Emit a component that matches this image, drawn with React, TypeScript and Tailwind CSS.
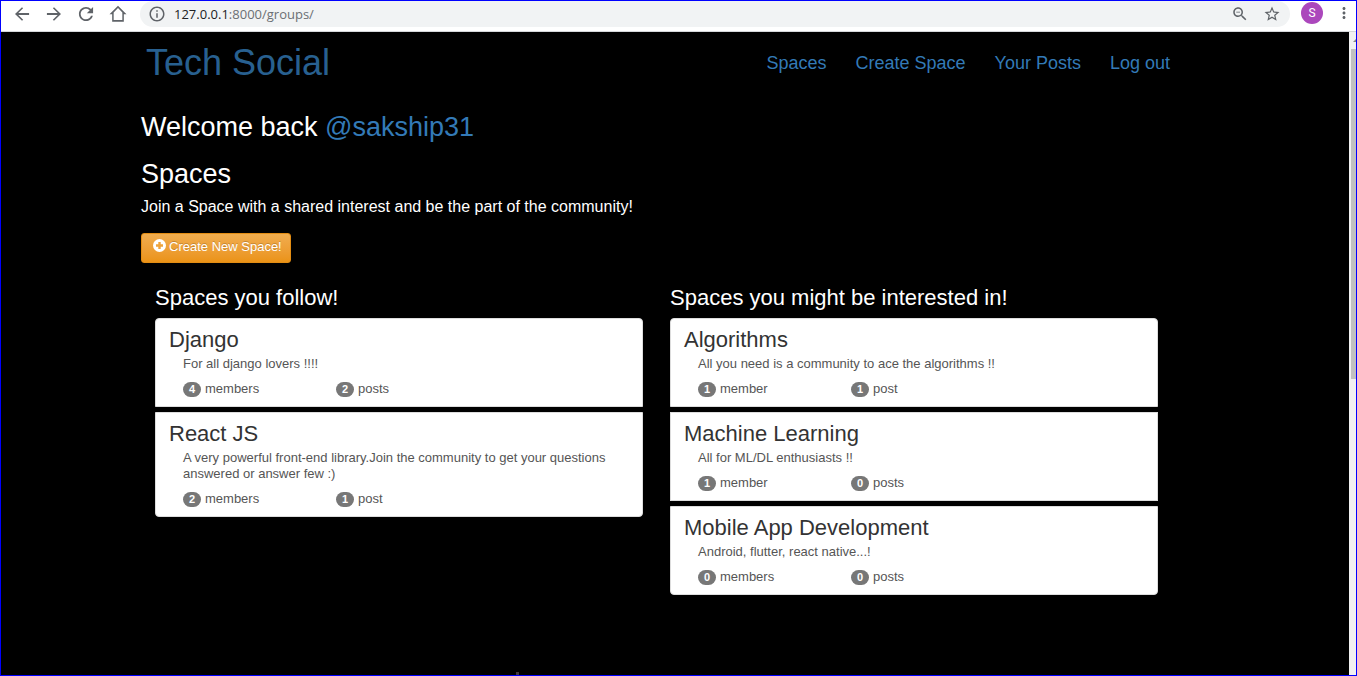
import React from "react";

type Space = {
  name: string;
  description: string;
  members: number;
  posts: number;
};

const followed: Space[] = [
  { name: "Django", description: "For all django lovers !!!!", members: 4, posts: 2 },
  {
    name: "React JS",
    description:
      "A very powerful front-end library.Join the community to get your questions answered or answer few :)",
    members: 2,
    posts: 1,
  },
];

const suggested: Space[] = [
  {
    name: "Algorithms",
    description: "All you need is a community to ace the algorithms !!",
    members: 1,
    posts: 1,
  },
  { name: "Machine Learning", description: "All for ML/DL enthusiasts !!", members: 1, posts: 0 },
  { name: "Mobile App Development", description: "Android, flutter, react native...!", members: 0, posts: 0 },
];

const navLinks = ["Spaces", "Create Space", "Your Posts", "Log out"];

function Glyph({ d, className = "size-5" }: { d: string; className?: string }) {
  return (
    <svg viewBox="0 0 24 24" className={`${className} shrink-0`} fill="currentColor" aria-hidden="true">
      <path d={d} />
    </svg>
  );
}

function BrowserBar() {
  return (
    <div className="flex h-[31px] shrink-0 items-start border-b border-[#d5d7da] bg-white pl-[11px] pr-[3px] text-[#5f6368]">
      <div className="flex h-[25px] items-center gap-3">
        <button type="button" aria-label="Back">
          <Glyph d="M20.500 10.900H7.600l5.700-5.700L12 3.800 3.600 12l8.400 8.200 1.400-1.400-5.800-5.700h12.900z" />
        </button>
        <button type="button" aria-label="Forward">
          <Glyph d="M3.500 10.900h12.900l-5.700-5.700L12 3.800l8.400 8.200-8.400 8.200-1.400-1.400 5.800-5.700H3.500z" />
        </button>
        <button type="button" aria-label="Reload">
          <Glyph d="M18 6C16.500 4.400 14.400 3.500 12 3.500c-4.700 0-8.500 3.800-8.500 8.500s3.800 8.500 8.500 8.500c4 0 7.300-2.700 8.200-6.400H18c-.9 2.500-3.200 4.300-6 4.300-3.500 0-6.400-2.900-6.400-6.400S8.500 5.600 12 5.600c1.800 0 3.400.7 4.500 1.900L13 11h7.500V3.500L18 6z" />
        </button>
        <button type="button" aria-label="Home">
          <Glyph d="M12 2L1.800 12.300H5v9h14v-9h3.200L12 2zm0 2.900l5.200 5.200v9.200H6.800v-9.200L12 4.900z" />
        </button>
      </div>
      <div className="ml-3 flex h-[26px] flex-1 items-center rounded-[13px] bg-[#f1f3f4] pl-2 pr-[9px]">
        <Glyph
          className="size-[18px]"
          d="M11 17h2v-6h-2v6zm1-15C6.480 2 2 6.480 2 12s4.480 10 10 10 10-4.480 10-10S17.520 2 12 2zm0 18c-4.410 0-8-3.590-8-8s3.590-8 8-8 8 3.590 8 8-3.590 8-8 8zM11 9h2V7h-2v2z"
        />
        <span className="ml-2 flex-1 pb-px font-['Open_Sans','Noto_Sans',sans-serif] text-[13px] leading-5 text-[#6b6f73]">
          <span className="text-[#202124]">127.0.0.1</span>:8000/groups/
        </span>
        <button type="button" aria-label="Zoom">
          <Glyph
            className="size-[18px]"
            d="M15.500 14h-.79l-.28-.27C15.410 12.590 16 11.110 16 9.500 16 5.910 13.090 3 9.500 3S3 5.910 3 9.500 5.910 16 9.500 16c1.610 0 3.090-.59 4.230-1.570l.27.28v.79l5 4.990L20.490 19l-4.990-5zm-6 0C7.010 14 5 11.990 5 9.500S7.010 5 9.500 5 14 7.010 14 9.500 11.990 14 9.500 14zM7 9h5v1H7z"
          />
        </button>
        <button type="button" aria-label="Bookmark" className="ml-[14px]">
          <Glyph
            className="size-[18px]"
            d="M22 9.240l-7.190-.62L12 2 9.190 8.630 2 9.240l5.460 4.730L5.820 21 12 17.270 18.180 21l-1.630-7.030L22 9.240zM12 15.400l-3.760 2.270 1-4.280-3.320-2.880 4.380-.38L12 6.100l1.710 4.040 4.380.38-3.320 2.880 1 4.280L12 15.400z"
          />
        </button>
      </div>
      <button
        type="button"
        aria-label="Profile"
        className="ml-[11px] mt-px flex size-[22px] items-center justify-center rounded-full bg-[#ab47bc] font-['Roboto',sans-serif] text-[12px] leading-none text-white"
      >
        S
      </button>
      <button type="button" aria-label="Menu" className="ml-3 mt-[3px]">
        <Glyph
          className="size-[18px]"
          d="M12 8c1.100 0 2-.9 2-2s-.9-2-2-2-2 .9-2 2 .9 2 2 2zm0 2c-1.100 0-2 .9-2 2s.9 2 2 2 2-.9 2-2-.9-2-2-2zm0 6c-1.100 0-2 .9-2 2s.9 2 2 2 2-.9 2-2-.9-2-2-2z"
        />
      </button>
    </div>
  );
}

function Count({ value, noun }: { value: number; noun: string }) {
  return (
    <div className="flex w-[153px] items-center gap-1">
      <span className="flex h-[15px] w-[18px] items-center justify-center rounded-full bg-[#777] text-[11px] font-bold leading-none text-white">
        {value}
      </span>
      <span>{value === 1 ? noun : `${noun}s`}</span>
    </div>
  );
}

function SpaceCard({ space }: { space: Space }) {
  return (
    <a
      href="#"
      className="block border border-[#ddd] bg-white px-[13px] pt-2 pb-[9px] text-[13px] leading-4 text-[#555] first:rounded-t last:rounded-b"
    >
      <h4 className="text-[22px] leading-[26px] text-[#333]">{space.name}</h4>
      <div className="px-[14px] pt-[3px]">
        <p>{space.description}</p>
        <div className="mt-[9px] flex">
          <Count value={space.members} noun="member" />
          <Count value={space.posts} noun="post" />
        </div>
      </div>
    </a>
  );
}

function SpaceColumn({ title, spaces }: { title: string; spaces: Space[] }) {
  return (
    <section>
      <h3 className="text-[22px] leading-[26px] text-white">{title}</h3>
      <div className="mt-[7px] flex flex-col gap-[5px]">
        {spaces.map((space) => (
          <SpaceCard key={space.name} space={space} />
        ))}
      </div>
    </section>
  );
}

export default function App() {
  return (
    <div className="flex min-h-screen flex-col border border-[#0000ff] bg-black font-['Liberation_Sans',Arial,sans-serif]">
      <BrowserBar />
      <div className="flex flex-1">
        <div className="flex min-w-0 flex-1 flex-col pl-[140px] pr-[179px]">
          <header className="flex items-center justify-between pt-[9px]">
            <a href="#" className="pl-[5px] text-[36px] leading-[44px] text-[#286090]">
              Tech Social
            </a>
            <nav className="flex gap-[29px] text-[18px] leading-6 text-[#337ab7]">
              {navLinks.map((label) => (
                <a key={label} href="#">
                  {label}
                </a>
              ))}
            </nav>
          </header>
          <main>
            <h2 className="mt-[26px] text-[27px] leading-8 text-white">
              Welcome back{" "}
              <a href="#" className="text-[#337ab7]">
                @sakship31
              </a>
            </h2>
            <h2 className="mt-[15px] text-[27px] leading-8 text-white">Spaces</h2>
            <p className="mt-[7px] text-[16px] leading-5 text-white">
              Join a Space with a shared interest and be the part of the community!
            </p>
            <button
              type="button"
              className="mt-4 flex h-[30px] items-start gap-[3px] rounded-[3px] border border-[#e38d13] bg-linear-to-b from-[#f0ad4e] to-[#eb9316] pl-[11px] pr-2 pt-[5px] text-[13px] leading-4 text-white [text-shadow:0_-1px_0_rgba(0,0,0,0.2)]"
            >
              <svg viewBox="0 0 13 13" className="size-[13px]" aria-hidden="true">
                <circle cx="6.5" cy="6.5" r="6.5" fill="#fff" />
                <path d="M5.300 3h2.400v2.300H10v2.400H7.700V10H5.300V7.700H3V5.300h2.300z" fill="#eea33b" />
              </svg>
              Create New Space!
            </button>
            <div className="mt-[22px] grid grid-cols-2 gap-[27px] pl-[14px] pr-3">
              <SpaceColumn title="Spaces you follow!" spaces={followed} />
              <SpaceColumn title="Spaces you might be interested in!" spaces={suggested} />
            </div>
          </main>
          <div className="ml-[375px] mt-auto size-[3px] bg-[#40383c]" aria-hidden="true" />
        </div>
        <div className="flex w-[7px] shrink-0 flex-col bg-[#f1f1f1] pl-[2px]" aria-hidden="true">
          <div className="flex h-[17px] items-center justify-end">
            <svg viewBox="0 0 3 3" className="size-[3px]">
              <path d="M0 3L3 0v3z" fill="#888" />
            </svg>
          </div>
          <div className="h-[330px] bg-[#c1c1c1]" />
        </div>
      </div>
    </div>
  );
}
